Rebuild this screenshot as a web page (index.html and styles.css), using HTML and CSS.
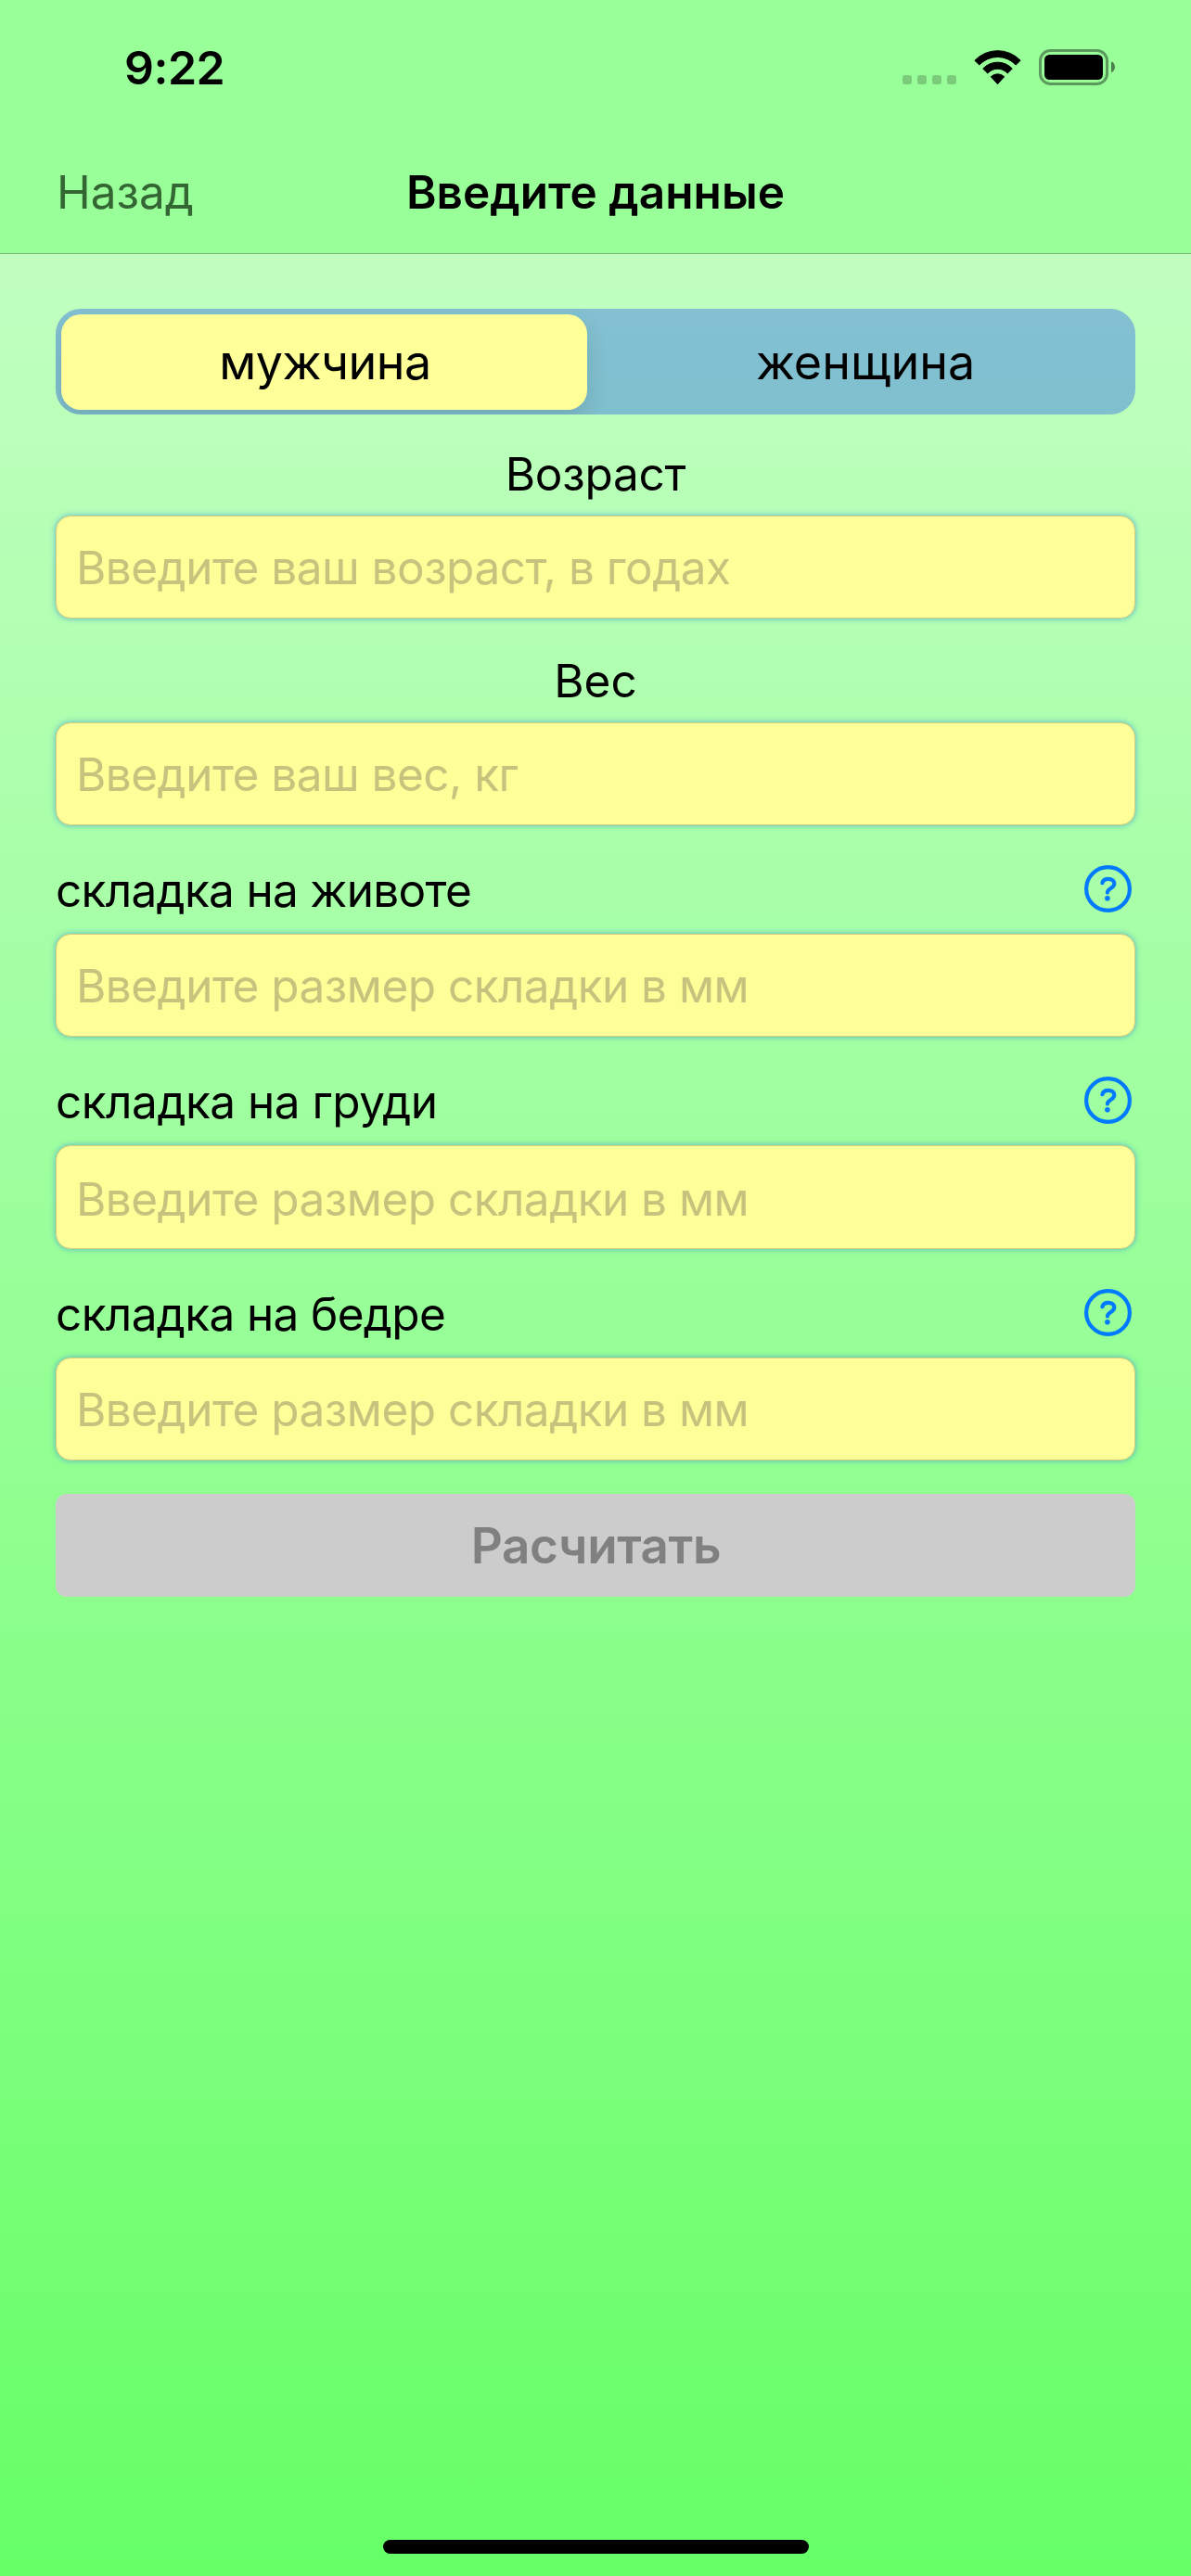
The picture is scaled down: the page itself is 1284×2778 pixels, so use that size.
FILE: index.html
```
<!DOCTYPE html>
<html lang="ru">
<head>
<meta charset="utf-8">
<title>Введите данные</title>
<link rel="stylesheet" href="styles.css">
</head>
<body>
<svg class="defs" width="0" height="0" aria-hidden="true">
  <symbol id="help" viewBox="0 0 51 51">
    <circle cx="25.5" cy="25.5" r="23.4" fill="none" stroke="currentColor" stroke-width="4.2"/>
    <path d="M19.4 19.2C20.1 16.4 22.5 14.8 25.8 14.8C29.6 14.8 32.3 16.9 32.3 20C32.3 25.2 24.9 24.8 24.9 29.6" fill="none" stroke="currentColor" stroke-width="4.2" stroke-linecap="round" stroke-linejoin="round"/>
    <circle cx="24.9" cy="35.8" r="2.8" fill="currentColor"/>
  </symbol>
</svg>
<div class="screen">
  <header class="top">
    <div class="status">
      <span class="time">9:22</span>
      <div class="indicators">
        <svg class="signal" width="58" height="10" viewBox="0 0 58 10">
          <rect width="10" height="10" rx="3"/><rect x="16" width="10" height="10" rx="3"/><rect x="32" width="10" height="10" rx="3"/><rect x="48" width="10" height="10" rx="3"/>
        </svg>
        <svg class="wifi" width="51" height="38" viewBox="0 0 51 38">
          <path d="M.9 11.2A34 34 0 0 1 50.1 11.2L45.2 16.1A26.8 26.8 0 0 0 5.8 16.1Z"/>
          <path d="M9.7 20.1A21.4 21.4 0 0 1 41.3 20.1L36.2 25.1A14.3 14.3 0 0 0 14.8 25.1Z"/>
          <path d="M18.3 28.7A10.5 10.5 0 0 1 32.7 28.7L25.5 36.7Z"/>
        </svg>
        <svg class="battery" width="82" height="39" viewBox="0 0 82 39">
          <rect x="1.5" y="1.5" width="72" height="36" rx="11" fill="none" stroke="#000" stroke-opacity=".4" stroke-width="3"/>
          <rect x="6" y="6" width="63" height="27" rx="5.5"/>
          <path d="M78 13.3C80.500 14.300 82 16.700 82 19.300S80.500 24.300 78 25.300Z" fill-opacity=".5"/>
        </svg>
      </div>
    </div>
    <nav class="nav">
      <a class="back">Назад</a>
      <h1 class="title">Введите данные</h1>
    </nav>
  </header>
  <main class="form">
    <div class="segment">
      <div class="option selected">мужчина</div>
      <div class="option other">женщина</div>
    </div>
    <div class="field age">
      <label class="label">Возраст</label>
      <input class="input" placeholder="Введите ваш возраст, в годах">
    </div>
    <div class="field weight">
      <label class="label">Вес</label>
      <input class="input" placeholder="Введите ваш вес, кг">
    </div>
    <div class="field fold">
      <div class="row"><label class="label belly">складка на животе</label><svg class="help"><use href="#help"/></svg></div>
      <input class="input" placeholder="Введите размер складки в мм">
    </div>
    <div class="field fold">
      <div class="row"><label class="label chest">складка на груди</label><svg class="help"><use href="#help"/></svg></div>
      <input class="input tall" placeholder="Введите размер складки в мм">
    </div>
    <div class="field fold">
      <div class="row"><label class="label thigh">складка на бедре</label><svg class="help"><use href="#help"/></svg></div>
      <input class="input" placeholder="Введите размер складки в мм">
    </div>
    <button class="submit" disabled>Расчитать</button>
  </main>
  <div class="home"></div>
</div>
</body>
</html>
```

FILE: styles.css
```
* { box-sizing: border-box; }
body { margin: 0; }
.defs { display: block; }

.screen {
  width: 1284px;
  height: 2778px;
  display: flex;
  flex-direction: column;
  overflow: hidden;
  font-family: Inter, "Noto Sans", sans-serif;
  font-size: 49.5px;
  color: #000;
  background: linear-gradient(#cbffcb, #66ff66);
}

.top {
  height: 274px;
  background: #99ff99;
  border-bottom: 1px solid #7cb37c;
}
.status {
  height: 141px;
  padding: 0 82px 0 134px;
  display: flex;
  justify-content: space-between;
}
.time {
  padding-top: 43px;
  font-size: 50px;
  font-weight: 600;
  line-height: 60px;
  letter-spacing: -0.5px;
}
.indicators {
  display: flex;
  align-items: flex-start;
  padding-top: 53px;
}
.indicators svg { display: block; flex: none; }
.signal { margin: 28px 19px 0 0; fill: rgba(0, 0, 0, .2); }
.wifi { margin: 1px 19px 0 0; stroke: #000; stroke-width: 1; stroke-linejoin: round; }

.nav {
  height: 132px;
  padding: 0 60px;
  display: grid;
  grid-template-columns: 1fr auto 1fr;
  align-items: center;
  line-height: 60px;
}
.back { color: #336633; padding-left: 1px; }
.title { margin: 0; font-size: 49.5px; font-weight: 600; letter-spacing: .04px; }

.form {
  flex: 1;
  display: flex;
  flex-direction: column;
  padding: 59px 60px 0;
}
.segment {
  height: 114px;
  padding: 6px;
  display: grid;
  grid-template-columns: 567px 1fr;
  border-radius: 27px;
  background: linear-gradient(#83c1d2, #7fbfce);
  overflow: hidden;
}
.option {
  font-size: 52px;
  line-height: 103px;
  text-align: center;
  letter-spacing: -.5px;
}
.selected {
  padding-left: 2px;
  border-radius: 21px;
  background: #ffff99;
  box-shadow: 0 9px 24px rgba(0, 0, 0, .12);
}
.other { letter-spacing: 0; padding-left: 15px; }

.field { display: flex; flex-direction: column; gap: 15px; }
.age { margin-top: 34px; }
.weight { margin-top: 37px; }
.fold { margin-top: 40px; gap: 17px; }
.age .label, .weight .label { text-align: center; }
.age .label { letter-spacing: -.27px; }
.label { line-height: 60px; }
.belly { letter-spacing: -.7px; }
.chest { letter-spacing: -.5px; }
.thigh { letter-spacing: -.64px; }
.row { height: 60px; display: flex; justify-content: space-between; }
.help {
  display: block;
  width: 51px;
  height: 51px;
  margin: 3px 4px 0 0;
  color: #007aff;
}

.input {
  width: 100%;
  height: 111px;
  padding: 1px 20px 0 21px;
  border: 1px solid #d4d07c;
  border-radius: 16px;
  background: #ffff99;
  box-shadow: 0 0 6px rgba(60, 150, 215, .75);
  font: inherit;
  letter-spacing: -.53px;
  outline: none;
}
.tall { height: 112px; padding-top: 3px; }
.input::placeholder { color: #c5c37d; opacity: 1; }

.submit {
  height: 111px;
  margin-top: 36px;
  padding: 1px 0 0 1px;
  border: 0;
  border-radius: 12px;
  background: #cccccc;
  color: #808080;
  font: 600 53px/110px Inter, "Noto Sans", sans-serif;
  letter-spacing: -.4px;
}

.home {
  align-self: center;
  width: 459px;
  height: 15px;
  margin-bottom: 24px;
  border-radius: 8px;
  background: #000;
}
```
